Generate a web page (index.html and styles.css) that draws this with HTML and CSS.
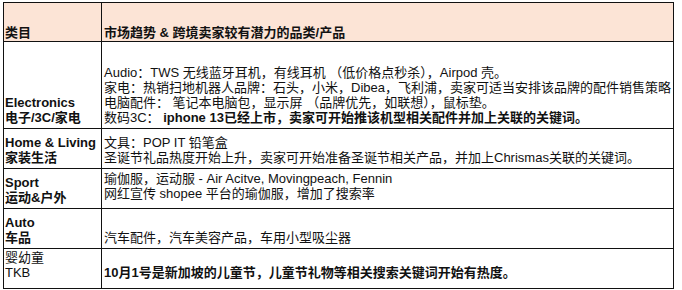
FILE: index.html
```html
<!DOCTYPE html>
<html lang="zh">
<head>
<meta charset="utf-8">
<title>市场趋势</title>
<link rel="stylesheet" href="styles.css">
</head>
<body>
<div class="trend">
  <div class="cell head">类目</div>
  <div class="cell head desc">市场趋势 &amp; 跨境卖家较有潜力的品类/产品</div>

  <div class="cell cat"><b>Electronics</b><b>电子/3C/家电</b></div>
  <div class="cell desc">
    <span>Audio：TWS 无线蓝牙耳机，有线耳机 （低价格点秒杀），Airpod 壳。</span>
    <span>家电：热销扫地机器人品牌：石头，小米，Dibea，飞利浦，卖家可适当安排该品牌的配件销售策略</span>
    <span>电脑配件：&nbsp;笔记本电脑包，显示屏 （品牌优先，如联想），鼠标垫。</span>
    <span>数码3C：&nbsp;<b>iphone 13已经上市，卖家可开始推该机型相关配件并加上关联的关键词。</b></span>
  </div>

  <div class="cell cat"><b>Home &amp; Living</b><b>家装生活</b></div>
  <div class="cell desc">
    <span>文具：POP IT 铅笔盒</span>
    <span>圣诞节礼品热度开始上升，卖家可开始准备圣诞节相关产品，并加上Chrismas关联的关键词。</span>
  </div>

  <div class="cell cat"><b>Sport</b><b>运动&amp;户外</b></div>
  <div class="cell desc raised">
    <span>瑜伽服，运动服 - Air Acitve, Movingpeach, Fennin</span>
    <span>网红宣传 shopee 平台的瑜伽服，增加了搜索率</span>
  </div>

  <div class="cell cat"><b>Auto</b><b>车品</b></div>
  <div class="cell desc">
    <span>汽车配件，汽车美容产品，车用小型吸尘器</span>
  </div>

  <div class="cell cat last"><span>婴幼童</span><span>TKB</span></div>
  <div class="cell desc last">
    <b>10月1号是新加坡的儿童节，儿童节礼物等相关搜索关键词开始有热度。</b>
  </div>
</div>
</body>
</html>
```

FILE: styles.css
```css
html, body {
  margin: 0;
  padding: 0;
  background: #fff;
}
body {
  padding: 2px 0 0 3px;
  font-family: "Liberation Sans", "Noto Sans CJK SC", sans-serif;
  font-size: 13px;
  line-height: 15px;
  color: #111;
}
.trend {
  display: grid;
  grid-template-columns: 97px 571px;
  grid-template-rows: 38px 86px 39px 39px 39px 39px;
  gap: 1px;
  padding: 1px;
  width: max-content;
  background: #111;
}
.cell {
  background: #fff;
  display: flex;
  flex-direction: column;
  justify-content: flex-end;
  padding: 0 1px 3px 1px;
  white-space: nowrap;
  overflow: hidden;
}
.cell.desc {
  padding-left: 2px;
  padding-right: 0;
}
.cell.head {
  background: #fce4d6;
  font-weight: bold;
  padding-bottom: 1px;
}
.cell.raised { padding-bottom: 7px; }
.cell.last { padding-bottom: 8px; }
.cell b { font-weight: bold; }
```
